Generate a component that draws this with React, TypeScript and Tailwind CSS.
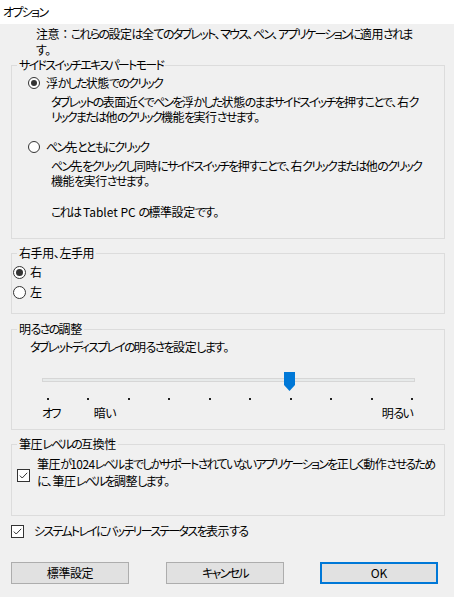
import React from "react";

function J({ t }: { t: string }) {
  const parts = t.split(/([\u3040-\u30FF]+)/);
  return (
    <>
      {parts.map((p, i) =>
        /^[\u3040-\u30FF]+$/.test(p) ? (
          <span key={i} className="tracking-[-1.7px]">
            {p}
          </span>
        ) : (
          <span key={i}>{p}</span>
        )
      )}
    </>
  );
}

function Radio({ checked, size = 13 }: { checked?: boolean; size?: number }) {
  const r = size / 2;
  return (
    <svg width={size} height={size} viewBox={`0 0 ${size} ${size}`} className="shrink-0">
      <circle cx={r} cy={r} r={r - 0.5} fill="#fff" stroke="#333" strokeWidth="1" />
      {checked && <circle cx={r} cy={r} r={size > 12 ? 3.5 : 3} fill="#333" />}
    </svg>
  );
}

function Check() {
  return (
    <svg width="13" height="13" viewBox="0 0 13 13" className="shrink-0">
      <rect x="0.5" y="0.5" width="12" height="12" fill="#fff" stroke="#333" />
      <path d="M2.8 6.6 L5.2 9 L10.2 3.8" fill="none" stroke="#333" strokeWidth="1" />
    </svg>
  );
}

export default function App() {
  const ticks = [0, 1, 2, 3, 4, 5, 6, 7, 8, 9];
  return (
    <div className="w-[454px] h-[597px] bg-[#f0f0f0] text-black text-[12px] leading-[16px] tracking-[-0.4px] font-['Noto_Sans_CJK_JP',sans-serif] [font-feature-settings:'palt'] overflow-hidden">
      <div className="h-[24px] bg-white pl-[3px] leading-[24px]">
        <J t="オプション" />
      </div>

      <div className="pl-[36px] mt-[2px] whitespace-nowrap">
        注意<span className="[font-feature-settings:normal]">：</span>
        <J t="これらの設定は全てのタブレット、マウス、ペン、アプリケーションに適用されま" />
        <br />
        <J t="す。" />
      </div>

      <fieldset className="ml-[11px] w-[434px] h-[181px] mt-0 border border-[#dcdcdc] p-0">
        <legend className="ml-[5px] px-[2px] leading-[14px]">
          <J t="サイドスイッチエキスパートモード" />
        </legend>
        <div className="flex items-center h-[16px] mt-[3px] pl-[16px] gap-[6px]">
          <Radio checked size={12} />
          <span>
            <J t="浮かした状態でのクリック" />
          </span>
        </div>
        <div className="pl-[39px] mt-[3px] leading-[15px] whitespace-nowrap">
          <J t="タブレットの表面近くでペンを浮かした状態のままサイドスイッチを押すことで、右ク" />
          <br />
          <J t="リックまたは他のクリック機能を実行させます。" />
        </div>
        <div className="flex items-center h-[16px] mt-[15px] pl-[16px] gap-[6px]">
          <Radio size={12} />
          <span>
            <J t="ペン先とともにクリック" />
          </span>
        </div>
        <div className="pl-[39px] mt-[3px] leading-[15px] whitespace-nowrap">
          <J t="ペン先をクリックし同時にサイドスイッチを押すことで、右クリックまたは他のクリック" />
          <br />
          <J t="機能を実行させます。" />
        </div>
        <div className="pl-[39px] mt-[16px] leading-[15px] whitespace-nowrap">
          <J t="これは" />
          <span className="tracking-[0px]"> Tablet PC </span>
          <J t="の標準設定です。" />
        </div>
      </fieldset>

      <fieldset className="ml-[11px] w-[434px] h-[68px] mt-[7px] border border-[#dcdcdc] p-0">
        <legend className="ml-[5px] px-[2px] leading-[14px]">
          <J t="右手用、左手用" />
        </legend>
        <div className="flex items-center h-[16px] mt-[4px] pl-[1px] gap-[4px]">
          <Radio checked />
          <span>右</span>
        </div>
        <div className="flex items-center h-[16px] mt-[4px] pl-[1px] gap-[4px]">
          <Radio />
          <span>左</span>
        </div>
      </fieldset>

      <fieldset className="ml-[11px] w-[434px] h-[108px] mt-[8px] border border-[#dcdcdc] p-0">
        <legend className="ml-[5px] px-[2px] leading-[14px]">
          <J t="明るさの調整" />
        </legend>
        <div className="pl-[18px] mt-[3px]">
          <J t="タブレットディスプレイの明るさを設定します。" />
        </div>
        <div className="relative ml-[30px] mt-[23px] w-[373px] h-[4px] bg-[#e7eaea] border border-[#d6d6d6]">
          <svg width="11" height="19" viewBox="0 0 11 19" className="absolute left-[241px] top-[-7px]">
            <polygon points="0,0 11,0 11,13 5.5,19 0,13" fill="#0078d7" />
          </svg>
        </div>
        <div className="flex justify-between ml-[35px] w-[366px] mt-[16px] h-[3px]">
          {ticks.map((t) => (
            <div key={t} className="w-[2px] h-[2px] bg-[#222]" />
          ))}
        </div>
        <div className="flex h-[16px] mt-[4px] pl-[30px] pr-[32px]">
          <span>
            <J t="オフ" />
          </span>
          <span className="ml-[34px]">
            <J t="暗い" />
          </span>
          <span className="ml-auto">
            <J t="明るい" />
          </span>
        </div>
      </fieldset>

      <fieldset className="ml-[11px] w-[434px] h-[79px] mt-[7px] border border-[#dcdcdc] p-0">
        <legend className="ml-[5px] px-[2px] leading-[14px]">
          <J t="筆圧レベルの互換性" />
        </legend>
        <div className="flex items-start pl-[5px] gap-[7px] mt-[4px]">
          <div className="mt-[14px]">
            <Check />
          </div>
          <div className="leading-[17px] whitespace-nowrap">
            <J t="筆圧が" />
            <span className="tracking-[-0.6px]">1024</span>
            <J t="レベルまでしかサポートされていないアプリケーションを正しく動作させるため" />
            <br />
            <J t="に、筆圧レベルを調整します。" />
          </div>
        </div>
      </fieldset>

      <div className="flex items-center h-[16px] mt-[7px] ml-[11px] gap-[10px]">
        <Check />
        <span>
          <J t="システムトレイにバッテリーステータスを表示する" />
        </span>
      </div>

      <div className="flex mt-[23px] ml-[11px]">
        <button className="w-[118px] h-[22px] bg-[#e1e1e1] border border-[#adadad] text-[12px] leading-[20px]">
          標準設定
        </button>
        <button className="ml-[37px] w-[118px] h-[22px] bg-[#e1e1e1] border border-[#adadad] text-[12px] leading-[20px]">
          <J t="キャンセル" />
        </button>
        <button className="ml-[36px] w-[118px] h-[22px] bg-[#e1e1e1] border-2 border-[#0078d7] text-[12px] leading-[18px] tracking-[0px]">
          OK
        </button>
      </div>
    </div>
  );
}
